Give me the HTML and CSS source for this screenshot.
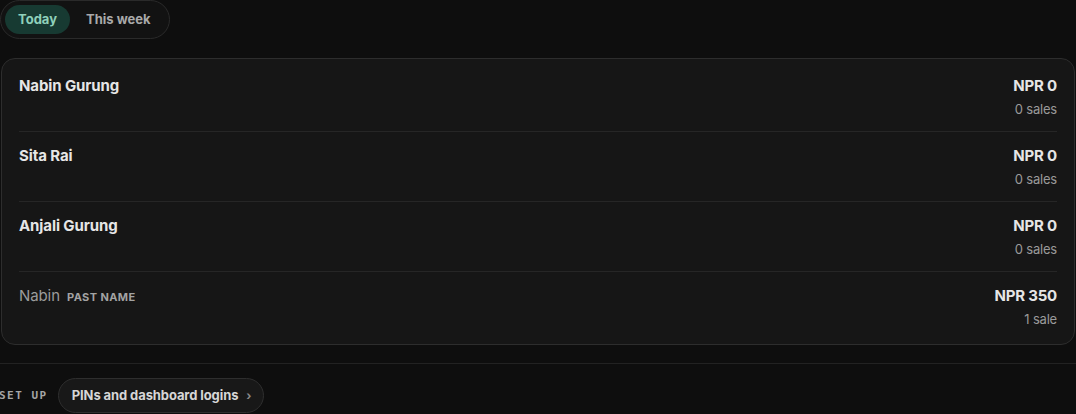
FILE: index.html
```html
<!DOCTYPE html>
<html lang="en">
<head>
<meta charset="utf-8">
<title>Staff sales</title>
<link rel="stylesheet" href="styles.css">
</head>
<body>
<div class="page">
  <div class="tabs">
    <button class="tab active">Today</button>
    <button class="tab">This week</button>
  </div>

  <div class="card">
    <div class="row">
      <div class="name">Nabin Gurung</div>
      <div class="stats"><div class="amount">NPR 0</div><div class="sales">0 sales</div></div>
    </div>
    <div class="row">
      <div class="name">Sita Rai</div>
      <div class="stats"><div class="amount">NPR 0</div><div class="sales">0 sales</div></div>
    </div>
    <div class="row">
      <div class="name">Anjali Gurung</div>
      <div class="stats"><div class="amount">NPR 0</div><div class="sales">0 sales</div></div>
    </div>
    <div class="row">
      <div class="name past">Nabin <span class="tag">Past name</span></div>
      <div class="stats"><div class="amount">NPR 350</div><div class="sales">1 sale</div></div>
    </div>
  </div>

  <div class="setup">
    <span class="setup-label">SET UP</span>
    <button class="link-pill">PINs and dashboard logins <span class="chev">›</span></button>
  </div>
</div>
</body>
</html>
```

FILE: styles.css
```css
* { box-sizing: border-box; }
html, body { margin: 0; background: #0e0e0e; }
body {
  font-family: Inter, "Noto Sans", "Liberation Sans", sans-serif;
  color: #e4e4e4;
  height: 414px;
  overflow: hidden;
}
.page { padding: 0 1px; }

.tabs {
  display: inline-flex;
  gap: 3px;
  padding: 4px;
  border: 1px solid #2a2a2a;
  border-radius: 20px;
  background: #121212;
  margin-left: -1px;
}
.tab {
  font: 700 13px/29px Inter, "Liberation Sans", sans-serif;
  height: 29px;
  padding: 0 13px 0 13px;
  border: 0;
  border-radius: 15px;
  background: transparent;
  color: #a9a9a9;
}
.tab:last-child { padding-right: 14px; }
.tab.active { background: #173a32; color: #8fd0ba; }

.card {
  margin-top: 19px;
  background: #161616;
  border: 1px solid #2d2d2d;
  border-radius: 14px;
  padding: 3px 17px 3px;
}
.row {
  display: flex;
  justify-content: space-between;
  align-items: flex-start;
  padding: 14px 0 13px;
  border-bottom: 1px solid #262626;
}
.row:last-child { border-bottom: 0; }
.name {
  font-size: 15px;
  font-weight: 700;
  line-height: 20px;
  color: #e6e6e6;
  letter-spacing: -0.1px;
}
.name.past { font-weight: 400; color: #9c9c9c; }
.tag {
  font-size: 11px;
  font-weight: 700;
  text-transform: uppercase;
  color: #a3a3a3;
  margin-left: 3px;
  letter-spacing: 0.4px;
}
.stats { text-align: right; }
.amount {
  font-size: 15px;
  font-weight: 700;
  line-height: 20px;
  color: #e6e6e6;
  letter-spacing: -0.2px;
}
.sales {
  font-size: 13px;
  line-height: 18px;
  margin-top: 4px;
  color: #9a9a9a;
  letter-spacing: -0.2px;
}

.setup {
  margin: 18px -1px 0;
  border-top: 1px solid #222;
  padding-top: 14px;
  display: flex;
  align-items: center;
  gap: 10px;
}
.setup-label {
  font: 700 11px/1 "DejaVu Sans Mono", "Liberation Mono", monospace;
  letter-spacing: 1.5px;
  color: #a5a5a5;
  margin-left: -1px;
}
.link-pill {
  font: 700 13px/1 Inter, "Liberation Sans", sans-serif;
  color: #d6d6d6;
  background: #181818;
  border: 1px solid #2e2e2e;
  border-radius: 18px;
  height: 35px;
  padding: 0 12px 0 13px;
  letter-spacing: -0.1px;
}
.chev { color: #8a8a8a; font-size: 12px; margin-left: 5px; }
```
